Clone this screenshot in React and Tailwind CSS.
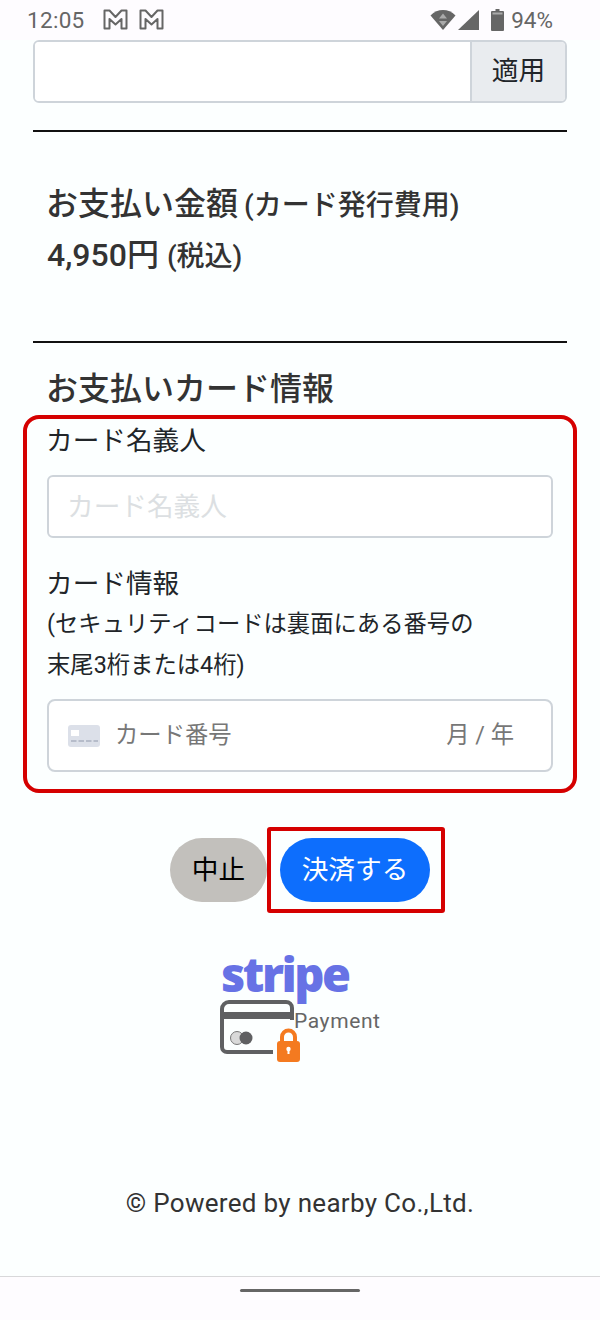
import React from "react";

const jp = "font-['Roboto','Noto_Sans_CJK_JP',sans-serif]";

const GmailIcon = () => (
  <svg width="25" height="21" viewBox="0 0 25 21" fill="none" stroke="#666" strokeWidth="2" strokeLinejoin="round">
    <path d="M1.500 1.500h5L12.500 8l6-6.500h5v18h-5V10l-6 5.500-6-5.500v9.500h-5z" />
  </svg>
);

const StatusBar = () => (
  <div className="h-10 bg-[#fefcff] flex items-center pl-[27px] pr-[47px] text-[#666] text-[22.500px] font-['Roboto',sans-serif] shrink-0">
    <span className="tracking-[0.3px] leading-none mt-[1px]">12:05</span>
    <div className="flex items-center gap-[11px] ml-[18px] -mt-[1px]">
      <GmailIcon />
      <GmailIcon />
    </div>
    <div className="ml-auto flex items-center">
      <svg width="26" height="22" viewBox="0 0 26 22">
        <path d="M0.500 6.500C4 2.800 8.500 1 13 1s9 1.800 12.500 5.500L13 21z" fill="#666" />
        <path d="M13 4.500l4 5H9z M9 12h8l-4 5z" fill="#aaa" />
      </svg>
      <svg width="21" height="22" viewBox="0 0 21 22" className="ml-[2px]">
        <path d="M21 1v20H0z" fill="#666" />
      </svg>
      <svg width="13" height="22" viewBox="0 0 13 22" className="ml-[12px]">
        <path d="M4.500 0h4v2h3.500a1 1 0 0 1 1 1v18a1 1 0 0 1-1 1H1a1 1 0 0 1-1-1V3a1 1 0 0 1 1-1h3.500z" fill="#666" />
        <rect x="1.500" y="3.500" width="10" height="2" fill="#aaa" />
      </svg>
      <span className="ml-[7px] leading-none mt-[1px]">94%</span>
    </div>
  </div>
);

const CardIcon = () => (
  <svg width="32" height="22" viewBox="0 0 32 22">
    <rect width="32" height="22" rx="3" fill="#dce0e9" />
    <rect x="3" y="5" width="8" height="6" fill="#fff" />
    <path d="M3 16h5.500M10.500 16H16M18 16h5.500M25.500 16H30" stroke="#a9b0c0" strokeWidth="1.500" />
  </svg>
);

const StripeLogo = () => (
  <div className="mt-[36px] mx-auto w-[160px] flex flex-col">
    <div className="ml-[1px] h-[50px] text-[#6772e5] text-[47px] font-extrabold leading-[50px] tracking-[-2.500px] font-['Open_Sans',sans-serif]">
      stripe
    </div>
    <div className="flex items-start mt-[1px]">
      <svg width="82" height="63" viewBox="0 0 82 63" className="shrink-0">
        <path d="M53 52H7a5 5 0 0 1-5-5V9a7 7 0 0 1 7-7h57a6 6 0 0 1 6 6v12" fill="none" stroke="#5f6062" strokeWidth="4" />
        <rect x="3" y="12" width="68" height="7" fill="#5f6062" />
        <circle cx="17" cy="38" r="6.500" fill="#d9d9d9" stroke="#777" strokeWidth="1" />
        <circle cx="26" cy="38" r="6.500" fill="#5f6062" />
        <path d="M62 42v-5a6.500 6.500 0 0 1 13 0v5" fill="none" stroke="#f47a20" strokeWidth="4" />
        <rect x="57" y="41" width="23" height="21" rx="3" fill="#f47a20" />
        <circle cx="68.500" cy="49" r="2.200" fill="#fff" />
        <rect x="67.500" y="49" width="2" height="5" fill="#fff" />
      </svg>
      <span className="-ml-[8px] mt-[9px] text-[#666] text-[21px] leading-[24px] font-['Roboto',sans-serif] tracking-[0.6px]">
        Payment
      </span>
    </div>
  </div>
);

export default function App() {
  return (
    <div className={`w-[600px] h-[1320px] bg-[#fcffff] flex flex-col overflow-hidden text-[#212529] ${jp}`}>
      <StatusBar />

      <div className="flex-1 flex flex-col">
        <div className="px-[33px]">
          <div className="flex h-[63px] border-2 border-[#ced4da] rounded-[6px] overflow-hidden">
            <div className="flex-1 bg-white" />
            <div className="w-[95px] bg-[#e9ecef] border-l-2 border-[#ced4da] flex items-center justify-center text-[26.670px] pb-[2px]">
              適用
            </div>
          </div>
          <div className="mt-[27px] h-[2px] bg-[#111]" />
        </div>

        <div className="pl-[47px] pt-[49px]">
          <div className="font-medium leading-[46px] h-[46px] text-[#333] whitespace-nowrap">
            <span className="text-[32px] -ml-[1px]">お支払い金額</span>{" "}
            <span className="text-[28px] ml-[2px]">(カード発行費用)</span>
          </div>
          <div className="font-medium leading-[46px] h-[46px] mt-[5px] text-[#333] whitespace-nowrap">
            <span className="text-[32px]">4,950円</span>{" "}
            <span className="text-[28px] ml-[4px]">(税込)</span>
          </div>
        </div>

        <div className="px-[33px] mt-[63px]">
          <div className="h-[2px] bg-[#111]" />
        </div>

        <div className="pl-[46px] pt-[24px] text-[32px] font-medium leading-[44px] text-[#333] whitespace-nowrap">
          お支払いカード情報
        </div>

        <div className="mx-[23px] mt-[4px] h-[378px] border-4 border-[#d50000] rounded-[16px] px-[20px] flex flex-col">
          <div className="text-[26.670px] leading-[40px] mt-[2px] -ml-[1px]">カード名義人</div>
          <div className="mt-[14px] h-[63px] bg-white border-2 border-[#ced4da] rounded-[6px] flex items-center px-[18px] text-[26.670px] text-[#dcdfe2]">
            カード名義人
          </div>
          <div className="mt-[26px] text-[26.670px] leading-[40px] -ml-[1px]">カード情報</div>
          <div className="text-[23.330px] leading-[41px] whitespace-nowrap">
            (セキュリティコードは裏面にある番号の
            <br />
            末尾3桁または4桁)
          </div>
          <div className="mt-[13px] h-[73px] bg-white border-2 border-[#ced4da] rounded-[8px] flex items-center pl-[19px] pr-[37px] text-[23.330px] text-[#777]">
            <CardIcon />
            <span className="ml-[15px]">カード番号</span>
            <span className="ml-auto">月 / 年</span>
          </div>
        </div>

        <div className="mt-[34px] flex items-start pl-[170px]">
          <button className="mt-[11px] w-[97px] h-[64px] rounded-full bg-[#c2c0bc] text-black text-[26.670px]">中止</button>
          <div className="w-[178px] h-[86px] border-4 border-[#d50000] rounded-[3px] pl-[9px] pt-[7px]">
            <button className="w-[150px] h-[64px] rounded-full bg-[#0d6efd] text-white text-[26.670px]">決済する</button>
          </div>
        </div>

        <StripeLogo />

        <div className="mt-[122px] text-center text-[26px] leading-[36px] text-[#333] font-['Roboto',sans-serif] tracking-[0.3px]">
          © Powered by nearby Co.,Ltd.
        </div>
      </div>

      <div className="h-[44px] bg-[#fefcff] border-t border-[#d8d8da] flex justify-center shrink-0">
        <div className="mt-[12px] w-[120px] h-[3px] rounded-full bg-[#666]" />
      </div>
    </div>
  );
}
